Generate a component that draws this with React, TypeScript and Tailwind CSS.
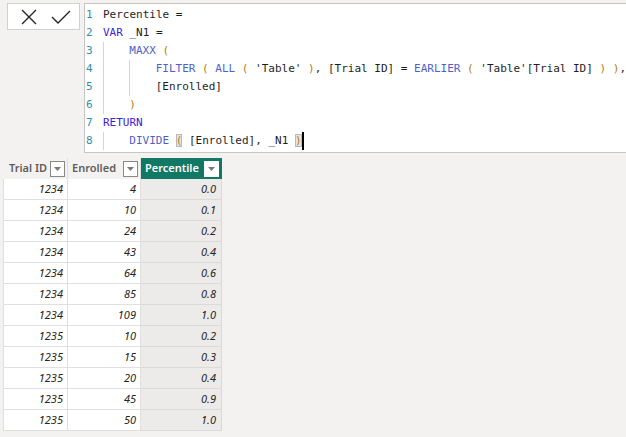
import React from 'react';

type Tok = { t: string; c?: string };

const KW = 'text-[#3a22d6]';
const FN = 'text-[#4f5fc7]';
const PR = 'text-[#b07c10]';
const TX = 'text-[#1e1e1e]';

// each line: indent level + tokens
const lines: { indent: number; toks: Tok[] }[] = [
  { indent: 0, toks: [{ t: 'Percentile =', c: TX }] },
  { indent: 0, toks: [{ t: 'VAR', c: KW }, { t: ' _N1 =', c: TX }] },
  { indent: 1, toks: [{ t: 'MAXX', c: FN }, { t: ' ' }, { t: '(', c: PR }] },
  {
    indent: 2,
    toks: [
      { t: 'FILTER', c: FN }, { t: ' ' }, { t: '(', c: PR }, { t: ' ' },
      { t: 'ALL', c: FN }, { t: ' ' }, { t: '(', c: PR }, { t: " 'Table' ", c: TX },
      { t: ')', c: PR }, { t: ', ', c: TX }, { t: '[Trial ID] = ', c: TX },
      { t: 'EARLIER', c: FN }, { t: ' ' }, { t: '(', c: PR }, { t: " 'Table'[Trial ID] ", c: TX },
      { t: ')', c: PR }, { t: ' ' }, { t: ')', c: PR }, { t: ',', c: TX },
    ],
  },
  { indent: 2, toks: [{ t: '[Enrolled]', c: TX }] },
  { indent: 1, toks: [{ t: ')', c: PR }] },
  { indent: 0, toks: [{ t: 'RETURN', c: KW }] },
  { indent: 1, toks: [{ t: 'DIVIDE', c: FN }, { t: ' ' }, { t: '(', c: 'match' }, { t: ' [Enrolled], _N1 ', c: TX }, { t: ')', c: 'match-end' }] },
];

const rows: [number, number, string][] = [
  [1234, 4, '0.0'], [1234, 10, '0.1'], [1234, 24, '0.2'], [1234, 43, '0.4'],
  [1234, 64, '0.6'], [1234, 85, '0.8'], [1234, 109, '1.0'], [1235, 10, '0.2'],
  [1235, 15, '0.3'], [1235, 20, '0.4'], [1235, 45, '0.9'], [1235, 50, '1.0'],
];

function Caret({ light }: { light?: boolean }) {
  return (
    <span className={`w-[15px] h-[16px] border ${light ? 'border-white bg-white' : 'border-[#8a8886] bg-white'} flex items-center justify-center`}>
      <svg width="7" height="4" viewBox="0 0 7 4"><path d="M0 0h7L3.5 4z" fill="#7a7876" /></svg>
    </span>
  );
}

function Tokens({ toks }: { toks: Tok[] }) {
  return (
    <>
      {toks.map((k, i) => {
        if (k.c === 'match')
          return <span key={i} className="bg-[#e4e4e4] outline outline-1 outline-[#b9b9b9] -outline-offset-1 text-[#b07c10]">(</span>;
        if (k.c === 'match-end')
          return (
            <span key={i} className="relative">
              <span className="bg-[#e4e4e4] outline outline-1 outline-[#b9b9b9] -outline-offset-1 text-[#b07c10]">)</span>
              <span className="absolute right-[-2px] top-[-2px] w-[2px] h-[18px] bg-black" />
            </span>
          );
        return <span key={i} className={k.c}>{k.t}</span>;
      })}
    </>
  );
}

export default function App() {
  return (
    <div className="w-[626px] h-[437px] bg-[#f3f2f1] overflow-hidden relative">
      <div className="flex pt-[3px]">
        <div className="ml-[7px] w-[75px] h-[27px] bg-white border border-[#d2d0ce] flex items-center gap-[14px] pl-[13px]">
          <svg width="16" height="16" viewBox="0 0 16 16"><path d="M1 1L15 15M15 1L1 15" stroke="#252423" strokeWidth="1.4" /></svg>
          <svg width="20" height="14" viewBox="0 0 20 14"><path d="M1 7L7 13L19 1" stroke="#252423" strokeWidth="1.4" fill="none" /></svg>
        </div>
        <div className="ml-[4px] flex-1 h-[150px] bg-white border border-r-0 border-[#c8c6c4] pt-[2px] font-['DejaVu_Sans_Mono',monospace] text-[11px] leading-[18px] whitespace-pre">
          {lines.map((ln, i) => (
            <div key={i} className="flex h-[18px]">
              <span className="w-[18px] pl-[1px] text-[#2b91af]">{i + 1}</span>
              {Array.from({ length: ln.indent }).map((_, j) => (
                <span key={j} className={`w-[26.4px] h-[18px] ${j === 0 && i >= 2 ? 'border-l border-[#d4d4d4]' : ''} ${j === 1 ? 'border-l border-[#d4d4d4]' : ''}`} />
              ))}
              <span><Tokens toks={ln.toks} /></span>
            </div>
          ))}
        </div>
      </div>

      <div className="mt-[5px] ml-[3px] w-[219px] font-['Noto_Sans',sans-serif] text-[11px]">
        <div className="flex h-[21px]">
          <div className="w-[65px] flex items-center justify-between pl-[6px] pr-[2px] border-r border-[#e1dfdd] font-semibold text-[#605e5c]">
            Trial ID <Caret />
          </div>
          <div className="w-[73px] flex items-center justify-between pl-[4px] pr-[2px] border-r border-[#e1dfdd] font-semibold text-[#605e5c]">
            Enrolled <Caret />
          </div>
          <div className="w-[81px] flex items-center justify-between pl-[4px] pr-[3px] bg-[#117865] font-semibold text-white">
            Percentile <Caret light />
          </div>
        </div>
        {rows.map((r, i) => (
          <div key={i} className="flex h-[21px] italic text-[#252423]">
            <div className="w-[65px] bg-white border-l border-b border-r border-[#e1dfdd] text-right pr-[4px] leading-[20px]">{r[0]}</div>
            <div className="w-[73px] bg-white border-b border-r border-[#e1dfdd] text-right pr-[4px] leading-[20px]">{r[1]}</div>
            <div className="w-[81px] bg-[#ecebea] border-b border-r border-[#dcdad8] text-right pr-[5px] leading-[20px]">{r[2]}</div>
          </div>
        ))}
      </div>
    </div>
  );
}
